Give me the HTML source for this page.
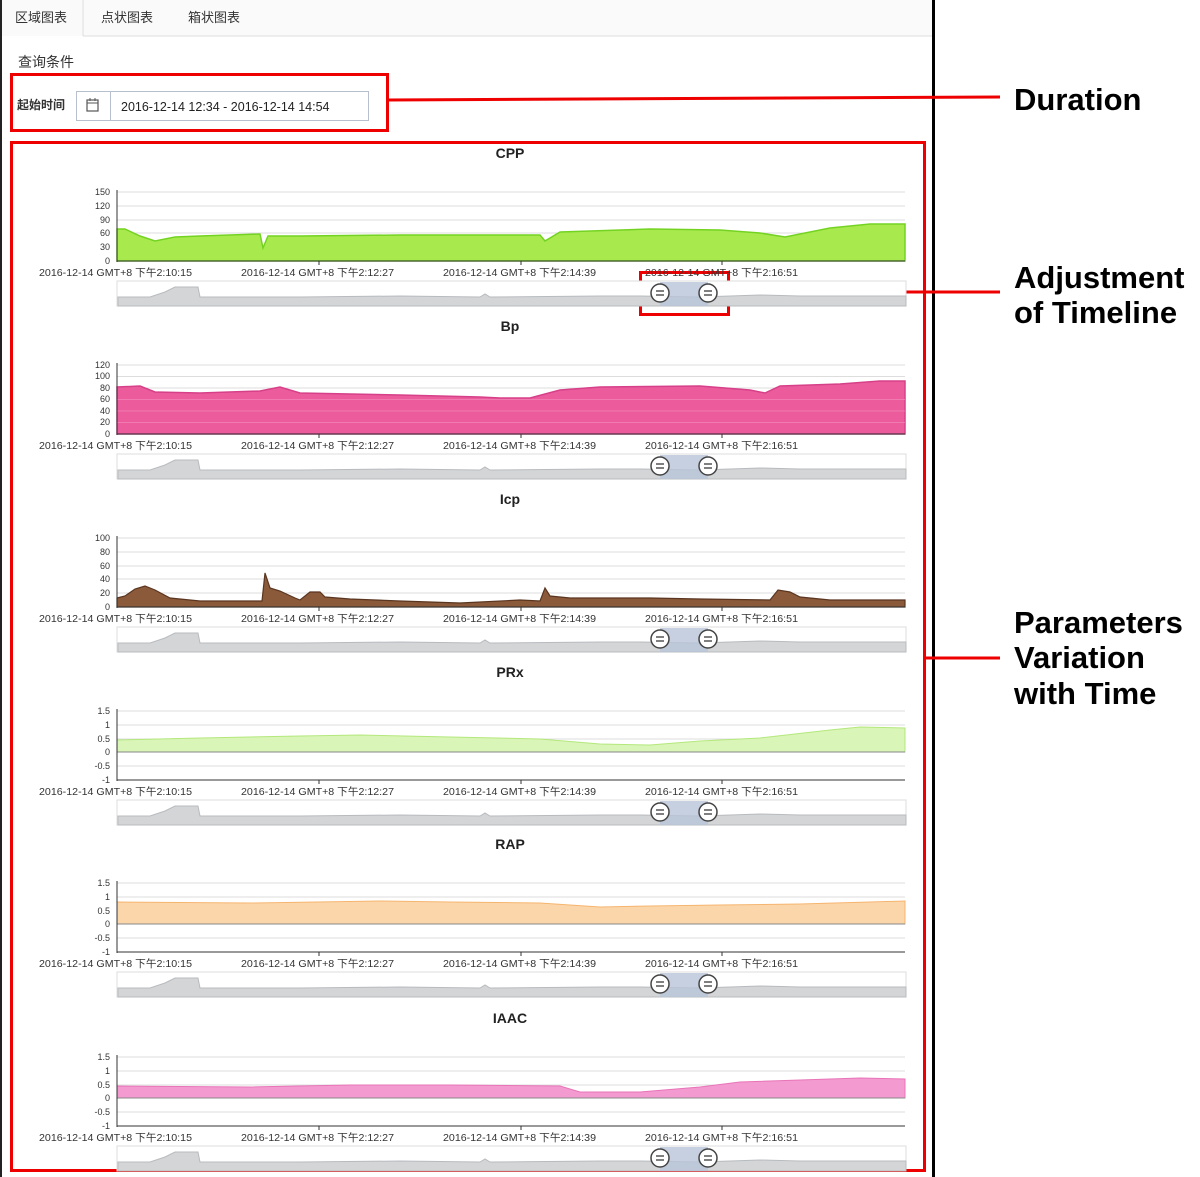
<!DOCTYPE html>
<html><head><meta charset="utf-8"><style>
body{margin:0;background:#fff;width:1200px;height:1177px;overflow:hidden;font-family:"Liberation Sans","Noto Sans CJK SC",sans-serif;}
svg{display:block}
</style></head><body>
<svg width="1200" height="1177" viewBox="0 0 1200 1177" xmlns="http://www.w3.org/2000/svg" font-family="Liberation Sans, Noto Sans CJK SC, sans-serif">
<defs>
<g id="nav">
<rect x="117" y="281" width="789" height="25" fill="#fff" stroke="#ddd"/>
<path d="M118 297 L150 297 L165 292 L175 287 L198 287 L200 297 L300 297 L400 296 L480 297 L485 294 L490 297 L600 296 L640 296 L700 297 L760 295 L800 296 L906 296 L906 306 L118 306Z" fill="#d3d5d7" stroke="#b8bbbe" stroke-width="1"/>
<rect x="660" y="282" width="48" height="24" fill="#b8c4d8" opacity="0.8"/>
<circle cx="660" cy="293" r="9" fill="#fff" stroke="#444" stroke-width="1.5"/><path d="M656 291h8M656 295h8" stroke="#333" stroke-width="1.3"/>
<circle cx="708" cy="293" r="9" fill="#fff" stroke="#444" stroke-width="1.5"/><path d="M704 291h8M704 295h8" stroke="#333" stroke-width="1.3"/>
</g>
<g id="xl" font-size="10.5" fill="#333">
<text x="39" y="276" textLength="153" lengthAdjust="spacingAndGlyphs">2016-12-14  GMT+8 下午2:10:15</text>
<text x="241" y="276" textLength="153" lengthAdjust="spacingAndGlyphs">2016-12-14  GMT+8 下午2:12:27</text>
<text x="443" y="276" textLength="153" lengthAdjust="spacingAndGlyphs">2016-12-14  GMT+8 下午2:14:39</text>
<text x="645" y="276" textLength="153" lengthAdjust="spacingAndGlyphs">2016-12-14  GMT+8 下午2:16:51</text>
</g>
<g id="axis"><path d="M117 190V262M117 261H905M319 261v4M521 261v4M722 261v4" stroke="#333" stroke-width="1" fill="none"/></g>
</defs>

<rect x="0" y="0" width="2" height="1177" fill="#222"/>
<rect x="932" y="0" width="3" height="1177" fill="#000"/>
<rect x="2" y="0" width="930" height="36" fill="#fafafa"/>
<path d="M83 36H932" stroke="#ddd"/>
<path d="M83 0V36" stroke="#ddd"/>
<text x="15" y="22" font-size="13" fill="#333">区域图表</text>
<text x="101" y="22" font-size="13" fill="#333">点状图表</text>
<text x="188" y="22" font-size="13" fill="#333">箱状图表</text>
<text x="18" y="67" font-size="14" fill="#333">查询条件</text>
<text x="17" y="109" font-size="12" font-weight="bold" fill="#333">起始时间</text>
<rect x="76.5" y="91.5" width="292" height="29" fill="#fff" stroke="#b8c0d0"/>
<path d="M110.5 92V120" stroke="#b8c0d0"/>
<rect x="87" y="100" width="11" height="11" fill="none" stroke="#555" stroke-width="1.2"/><path d="M87 103h11M90 98v3M95 98v3" stroke="#555"/>
<text x="121" y="111" font-size="12.5" fill="#222">2016-12-14 12:34 - 2016-12-14 14:54</text>

<rect x="11.5" y="74.5" width="376" height="56" fill="none" stroke="#e00" stroke-width="3"/>
<rect x="11.5" y="142.5" width="913" height="1028" fill="none" stroke="#e00" stroke-width="3"/>
<rect x="640.5" y="272.5" width="88" height="42" fill="none" stroke="#e00" stroke-width="3"/>
<path d="M388 100L1000 97M729 292H1000M925 658H1000" stroke="#e00" stroke-width="3"/>
<g font-size="31" font-weight="bold" fill="#000">
<text x="1014" y="110">Duration</text>
<text x="1014" y="288">Adjustment</text>
<text x="1014" y="323">of Timeline</text>
<text x="1014" y="633">Parameters</text>
<text x="1014" y="668">Variation</text>
<text x="1014" y="704">with Time</text>
</g>

<g>
<text x="510" y="158" font-size="14" font-weight="bold" text-anchor="middle" fill="#222">CPP</text>
<g stroke="#ddd"><path d="M117 192H905M117 206H905M117 220H905M117 233H905M117 247H905"/></g>
<g font-size="9" fill="#333" text-anchor="end"><text x="110" y="195">150</text><text x="110" y="209">120</text><text x="110" y="223">90</text><text x="110" y="236">60</text><text x="110" y="250">30</text><text x="110" y="264">0</text></g>
<path d="M117 229L125 229L140 236L155 241L175 237L200 236L260 234L263 248L268 236L300 236L400 235L540 235L545 241L560 232L650 229L720 230L760 233L785 237L810 232L830 228L870 224L905 224V261H117Z" fill="#a8ea4e" stroke="#74d322" stroke-width="1.5"/>
<use href="#axis"/><use href="#xl"/><use href="#nav"/>
</g>

<g transform="translate(0,173)">
<text x="510" y="158" font-size="14" font-weight="bold" text-anchor="middle" fill="#222">Bp</text>
<g stroke="#ddd"><path d="M117 192H905M117 203.5H905M117 215H905M117 226.5H905M117 238H905M117 249.5H905"/></g>
<g font-size="9" fill="#333" text-anchor="end"><text x="110" y="195">120</text><text x="110" y="206">100</text><text x="110" y="218">80</text><text x="110" y="229">60</text><text x="110" y="241">40</text><text x="110" y="252">20</text><text x="110" y="264">0</text></g>
<path d="M117 214L140 213L155 219L200 220L260 218L280 214L300 220L400 222L480 224L500 225L530 225L560 217L600 214L700 213L750 217L765 220L780 213L840 211L880 208L905 208V261H117Z" fill="#ec5c9d" stroke="#d64088" stroke-width="1.5"/>
<g stroke="#f58fbd" opacity="0.6"><path d="M117 226.5H905M117 238H905M117 249.5H905"/></g>
<use href="#axis"/><use href="#xl"/><use href="#nav"/>
</g>

<g transform="translate(0,346)">
<text x="510" y="158" font-size="14" font-weight="bold" text-anchor="middle" fill="#222">Icp</text>
<g stroke="#ddd"><path d="M117 192H905M117 206H905M117 220H905M117 233H905M117 247H905"/></g>
<g font-size="9" fill="#333" text-anchor="end"><text x="110" y="195">100</text><text x="110" y="209">80</text><text x="110" y="223">60</text><text x="110" y="236">40</text><text x="110" y="250">20</text><text x="110" y="264">0</text></g>
<path d="M117 252L125 250L135 243L145 240L155 244L170 252L200 255L258 255L262 255L265 227L270 242L280 245L295 252L300 254L310 246L320 246L325 251L350 253L400 255L460 257L520 254L540 255L545 242L550 250L570 252L650 252L700 253L770 254L778 244L790 246L800 251L830 254L905 254V261H117Z" fill="#8b5a3a" stroke="#5a3520" stroke-width="1.2"/>
<use href="#axis"/><use href="#xl"/><use href="#nav"/>
</g>

<g transform="translate(0,519)">
<text x="510" y="158" font-size="14" font-weight="bold" text-anchor="middle" fill="#222">PRx</text>
<g stroke="#ddd"><path d="M117 192H905M117 206H905M117 220H905M117 233H905M117 247H905"/></g>
<g font-size="9" fill="#333" text-anchor="end"><text x="110" y="195">1.5</text><text x="110" y="209">1</text><text x="110" y="223">0.5</text><text x="110" y="236">0</text><text x="110" y="250">-0.5</text><text x="110" y="264">-1</text></g>
<path d="M117 221L200 219L300 217L360 216L450 218L540 220L600 225L650 226L700 222L760 219L830 211L860 208L905 209V233H117Z" fill="#d9f5b8" stroke="#b4e87c" stroke-width="1"/>
<path d="M117 233H905" stroke="#888"/>
<use href="#axis"/><use href="#xl"/><use href="#nav"/>
</g>

<g transform="translate(0,691)">
<text x="510" y="158" font-size="14" font-weight="bold" text-anchor="middle" fill="#222">RAP</text>
<g stroke="#ddd"><path d="M117 192H905M117 206H905M117 220H905M117 233H905M117 247H905"/></g>
<g font-size="9" fill="#333" text-anchor="end"><text x="110" y="195">1.5</text><text x="110" y="209">1</text><text x="110" y="223">0.5</text><text x="110" y="236">0</text><text x="110" y="250">-0.5</text><text x="110" y="264">-1</text></g>
<path d="M117 211L250 212L380 210L450 211L540 212L600 216L650 215L720 214L800 213L870 211L905 210V233H117Z" fill="#fcd6ab" stroke="#f5b56f" stroke-width="1"/>
<path d="M117 233H905" stroke="#888"/>
<use href="#axis"/><use href="#xl"/><use href="#nav"/>
</g>

<g transform="translate(0,865)">
<text x="510" y="158" font-size="14" font-weight="bold" text-anchor="middle" fill="#222">IAAC</text>
<g stroke="#ddd"><path d="M117 192H905M117 206H905M117 220H905M117 233H905M117 247H905"/></g>
<g font-size="9" fill="#333" text-anchor="end"><text x="110" y="195">1.5</text><text x="110" y="209">1</text><text x="110" y="223">0.5</text><text x="110" y="236">0</text><text x="110" y="250">-0.5</text><text x="110" y="264">-1</text></g>
<path d="M117 221L250 222L350 220L450 220L560 221L580 227L640 227L700 222L740 217L800 215L860 213L905 214V233H117Z" fill="#f39bd0" stroke="#e874b8" stroke-width="1"/>
<path d="M117 233H905" stroke="#888"/>
<use href="#axis"/><use href="#xl"/><use href="#nav"/>
</g>
</svg>
</body></html>
